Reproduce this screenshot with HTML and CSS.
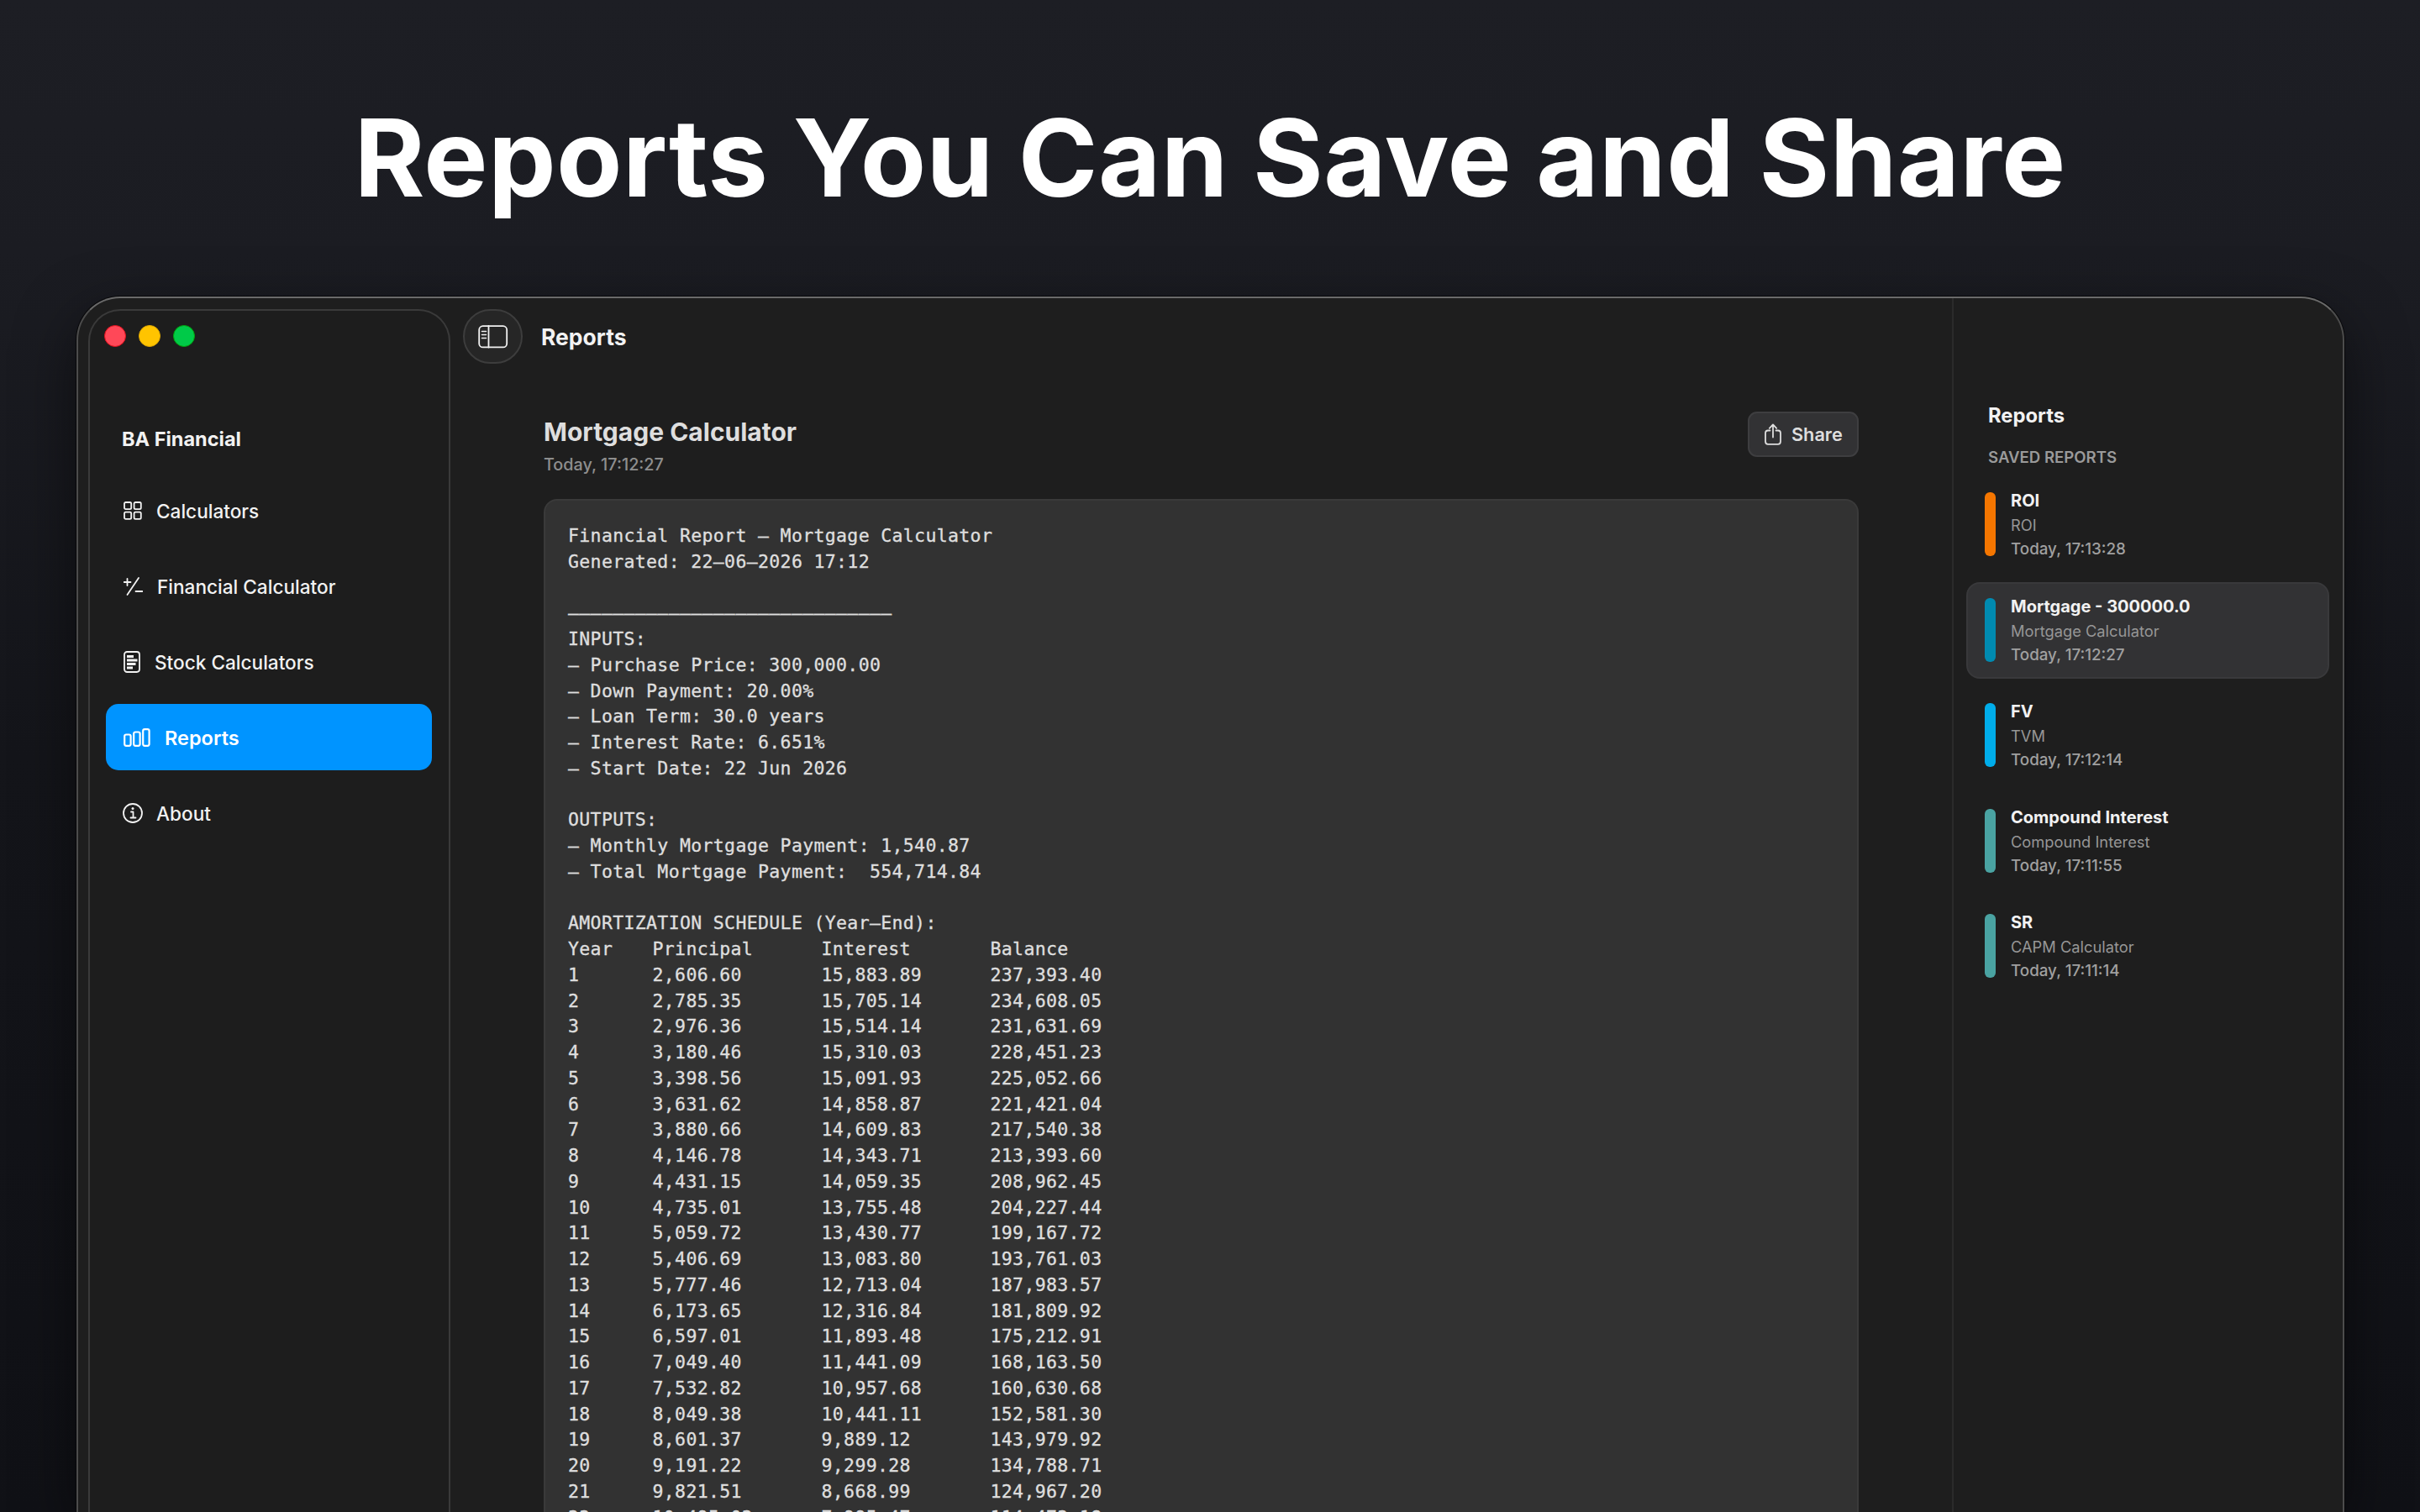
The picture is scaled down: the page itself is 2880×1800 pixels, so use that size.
FILE: index.html
```html
<!DOCTYPE html>
<html lang="en">
<head>
<meta charset="utf-8">
<title>BA Financial – Reports</title>
<link rel="stylesheet" href="styles.css">
</head>
<body>
<h1 class="headline">Reports You Can Save and Share</h1>
<div class="window">
  <aside class="sidebar">
    <div class="lights"><i class="light red"></i><i class="light yellow"></i><i class="light green"></i></div>
    <div class="brand"><span>BA Financial</span></div>
    <nav class="nav">
      <a class="nav-item"><svg width="22" height="22" viewBox="0 0 22 22"><rect x="1" y="1" width="8.2" height="8.2" rx="1.6"/><rect x="12.6" y="1" width="8.2" height="8.2" rx="1.6"/><rect x="1" y="12.6" width="8.2" height="8.2" rx="1.6"/><rect x="12.6" y="12.6" width="8.2" height="8.2" rx="1.6"/></svg><span>Calculators</span></a>
      <a class="nav-item"><svg width="23" height="22" viewBox="0 0 23 22"><path d="M18 1L4.5 21M.5 6h8M4.5 2v8M14.5 17h8"/></svg><span>Financial Calculator</span></a>
      <a class="nav-item"><svg width="20" height="26" viewBox="0 0 20 26"><rect x="1" y="1" width="18" height="24" rx="3.2"/><path class="lines" d="M4 6.5h8M4 11h12.5M4 15.5h10.5M4 20h7"/></svg><span>Stock Calculators</span></a>
      <a class="nav-item active"><svg width="32" height="22" viewBox="0 0 32 22"><rect x="1.2" y="7.5" width="7.4" height="13.3" rx="2"/><rect x="12.2" y="4.5" width="7.4" height="16.3" rx="2"/><rect x="23.2" y="1.2" width="7.4" height="19.6" rx="2"/></svg><span>Reports</span></a>
      <a class="nav-item about"><svg width="24" height="24" viewBox="0 0 24 24"><circle cx="12" cy="12" r="11"/><path d="M10 10.5h2.5v7M9.5 17.5h6"/><circle class="dot" cx="12" cy="6.5" r="1.5"/></svg><span>About</span></a>
    </nav>
  </aside>
  <main class="main">
    <header class="toolbar">
      <div class="toggle"><svg width="36" height="28" viewBox="0 0 36 28"><rect x="1.2" y="1.2" width="33" height="25.2" rx="4.5"/><path d="M12.5 1v25.5"/><path class="thin" d="M4.5 7.5h5M4.5 11.5h5M4.5 15.5h5"/></svg></div>
      <span class="toolbar-title">Reports</span>
    </header>
    <section class="report">
      <div class="report-head">
        <div><h2 class="report-title">Mortgage Calculator</h2><div class="report-date">Today, 17:12:27</div></div>
        <div class="share"><svg width="20" height="26" viewBox="0 0 20 26"><path d="M6.5 8.5H4Q1 8.5 1 11.5V21.5Q1 24.8 4 24.8H16Q19 24.8 19 21.5V11.5Q19 8.5 16 8.5H13.5M10 16.5V2M5.8 5.8L10 1.5L14.2 5.8"/></svg><span>Share</span></div>
      </div>
      <pre class="paper">Financial Report — Mortgage Calculator
Generated: 22–06–2026 17:12

–––––––––––––––––––––––––––––
INPUTS:
– Purchase Price: 300,000.00
– Down Payment: 20.00%
– Loan Term: 30.0 years
– Interest Rate: 6.651%
– Start Date: 22 Jun 2026

OUTPUTS:
– Monthly Mortgage Payment: 1,540.87
– Total Mortgage Payment:  554,714.84

AMORTIZATION SCHEDULE (Year–End):
<span class="row"><b>Year</b><b>Principal</b><b>Interest</b><b>Balance</b></span><span class="row"><b>1</b><b>2,606.60</b><b>15,883.89</b><b>237,393.40</b></span><span class="row"><b>2</b><b>2,785.35</b><b>15,705.14</b><b>234,608.05</b></span><span class="row"><b>3</b><b>2,976.36</b><b>15,514.14</b><b>231,631.69</b></span><span class="row"><b>4</b><b>3,180.46</b><b>15,310.03</b><b>228,451.23</b></span><span class="row"><b>5</b><b>3,398.56</b><b>15,091.93</b><b>225,052.66</b></span><span class="row"><b>6</b><b>3,631.62</b><b>14,858.87</b><b>221,421.04</b></span><span class="row"><b>7</b><b>3,880.66</b><b>14,609.83</b><b>217,540.38</b></span><span class="row"><b>8</b><b>4,146.78</b><b>14,343.71</b><b>213,393.60</b></span><span class="row"><b>9</b><b>4,431.15</b><b>14,059.35</b><b>208,962.45</b></span><span class="row"><b>10</b><b>4,735.01</b><b>13,755.48</b><b>204,227.44</b></span><span class="row"><b>11</b><b>5,059.72</b><b>13,430.77</b><b>199,167.72</b></span><span class="row"><b>12</b><b>5,406.69</b><b>13,083.80</b><b>193,761.03</b></span><span class="row"><b>13</b><b>5,777.46</b><b>12,713.04</b><b>187,983.57</b></span><span class="row"><b>14</b><b>6,173.65</b><b>12,316.84</b><b>181,809.92</b></span><span class="row"><b>15</b><b>6,597.01</b><b>11,893.48</b><b>175,212.91</b></span><span class="row"><b>16</b><b>7,049.40</b><b>11,441.09</b><b>168,163.50</b></span><span class="row"><b>17</b><b>7,532.82</b><b>10,957.68</b><b>160,630.68</b></span><span class="row"><b>18</b><b>8,049.38</b><b>10,441.11</b><b>152,581.30</b></span><span class="row"><b>19</b><b>8,601.37</b><b>9,889.12</b><b>143,979.92</b></span><span class="row"><b>20</b><b>9,191.22</b><b>9,299.28</b><b>134,788.71</b></span><span class="row"><b>21</b><b>9,821.51</b><b>8,668.99</b><b>124,967.20</b></span><span class="row"><b>22</b><b>10,495.02</b><b>7,995.47</b><b>114,472.18</b></span></pre>
    </section>
  </main>
  <aside class="saved">
    <div class="saved-title"><span>Reports</span></div>
    <div class="saved-sub"><span>SAVED REPORTS</span></div>
    <div class="saved-list">
      <div class="card"><i class="bar orange"></i><div><p class="name">ROI</p><p class="kind">ROI</p><p class="time">Today, 17:13:28</p></div></div>
      <div class="card selected"><i class="bar teal-blue"></i><div><p class="name">Mortgage - 300000.0</p><p class="kind">Mortgage Calculator</p><p class="time">Today, 17:12:27</p></div></div>
      <div class="card"><i class="bar sky"></i><div><p class="name">FV</p><p class="kind">TVM</p><p class="time">Today, 17:12:14</p></div></div>
      <div class="card"><i class="bar teal"></i><div><p class="name">Compound Interest</p><p class="kind">Compound Interest</p><p class="time">Today, 17:11:55</p></div></div>
      <div class="card"><i class="bar teal"></i><div><p class="name">SR</p><p class="kind">CAPM Calculator</p><p class="time">Today, 17:11:14</p></div></div>
    </div>
  </aside>
</div>
</body>
</html>
```

FILE: styles.css
```css
* { box-sizing: border-box; margin: 0; padding: 0; }
html, body { height: 1800px; overflow: hidden; }
body {
  width: 2880px;
  display: flex;
  flex-direction: column;
  background: linear-gradient(180deg, #1d1e24 0, #1b1c22 300px, #14151a 900px, #101116 1800px);
  font-family: Inter, "Liberation Sans", sans-serif;
  color: #f2f2f2;
}
svg { fill: none; stroke: currentColor; stroke-width: 1.8; stroke-linecap: round; stroke-linejoin: round; flex: none; display: block; }
.dot { fill: currentColor; stroke: none; }
.lines { stroke-width: 2.8; stroke-linecap: butt; }
.thin { stroke-width: 1.6; }
.headline {
  height: 353px;
  flex: none;
  padding-top: 110px;
  text-align: center;
  font-size: 128px;
  line-height: 156px;
  font-weight: 700;
  letter-spacing: .4px;
  word-spacing: -1.5px;
  white-space: nowrap;
  color: #fff;
}
.window {
  width: 2699px;
  height: 1447px;
  flex: none;
  margin-left: 91px;
  display: flex;
  overflow: hidden;
  background: #1e1e1e;
  border: 2px solid #4c4c4c;
  border-top-color: #6a6a6a;
  border-bottom: 0;
  border-radius: 52px 52px 0 0;
  box-shadow: 0 0 0 1px #08080a, 0 24px 70px rgba(0, 0, 0, .5);
}
.sidebar {
  width: 431px;
  margin: 13px 0 0 12px;
  border: 2px solid #3a3a3a;
  border-bottom: 0;
  border-radius: 38px 38px 0 0;
  background: #1d1d1d;
  flex: none;
}
.lights { display: flex; gap: 15px; padding: 17px 0 0 17px; height: 133px; }
.light { width: 26px; height: 26px; border-radius: 50%; border: 1px solid; }
.red { background: #ff4858; border-color: #e2101c; }
.yellow { background: #ffc400; border-color: #e0a800; }
.green { background: #00ca48; border-color: #00a40c; }
.brand { padding-left: 38px; font-size: 23.5px; line-height: 40px; font-weight: 700; height: 40px; }
.nav { display: flex; flex-direction: column; gap: 11px; padding: 25px 20px 0 19px; }
.nav-item { display: flex; align-items: center; height: 79px; padding: 1px 0 0 21px; font-size: 22.6px; font-weight: 450; border-radius: 15px; }
.nav-item span { margin-left: 17px; }
.active { background: #0094ff; color: #fff; font-weight: 600; font-size: 23.5px; }
.active svg { stroke-width: 2.2; }
.about { padding-left: 20px; }
.about span { margin-left: 16px; }
.main { width: 1787px; flex: none; display: flex; flex-direction: column; }
.toolbar { flex: none; display: flex; align-items: center; height: 91px; padding: 0 0 0 15px; }
.toggle { width: 71px; height: 65px; border: 2px solid #3d3d3d; border-radius: 33px; background: #262626; display: flex; align-items: center; justify-content: center; }
.toolbar-title { margin-left: 22px; font-size: 26.5px; font-weight: 650; }
.report { padding: 42px 111px 0 111px; }
.report-head { display: flex; justify-content: space-between; height: 106px; color: #dedede; }
.report-title { padding-top: 3px; font-size: 30px; line-height: 46px; font-weight: 700; }
.report-date { padding-top: 1px; font-size: 19.8px; line-height: 30px; color: #8e8e8e; font-weight: 450; }
.share { width: 132px; height: 54px; margin-top: 2px; border: 2px solid #3e3e40; border-radius: 11px; background: #323234; display: flex; align-items: center; padding-left: 18px; gap: 12px; font-size: 21.7px; font-weight: 600; }
.paper {
  height: 1220px;
  overflow: hidden;
  padding: 27px 28px 0 27px;
  background: #323232;
  border: 2px solid #3a3a3a;
  border-bottom: 0;
  border-radius: 16px 16px 0 0;
  font-family: "DejaVu Sans Mono", "Liberation Mono", monospace;
  font-size: 21.5px;
  line-height: 30.75px;
  letter-spacing: .35px;
  color: #dedede;
  -webkit-text-stroke: .35px #dedede;
}
.row { display: grid; grid-template-columns: 100.5px 201px 201px 1fr; height: 30.75px; }
.row b { font-weight: 400; }
.saved { flex: 1; border-left: 2px solid #2b2b2b; padding-top: 120px; }
.saved-title { padding-left: 41px; font-size: 23.8px; line-height: 40px; font-weight: 700; }
.saved-sub { padding-left: 41px; padding-top: 17px; font-size: 18.6px; line-height: 24px; font-weight: 600; color: #9a9a9a; }
.saved-list { display: flex; flex-direction: column; gap: 10.6px; padding: 11px 16px 0 15px; }
.card { height: 115px; border: 2px solid transparent; border-radius: 16px; display: flex; padding: 17px 0 0 20px; gap: 18px; }
.selected { background: #323234; border-color: #39393b; }
.bar { width: 13px; height: 76px; border-radius: 6px; }
.orange { background: #f57600; }
.teal-blue { background: #008ab0; }
.sky { background: #00adea; }
.teal { background: #4aa3a2; }
.name { font-size: 20px; line-height: 20px; font-weight: 650; }
.kind { font-size: 18.3px; line-height: 20px; margin-top: 9px; color: #969696; }
.time { font-size: 18.8px; line-height: 20px; margin-top: 9px; color: #a0a0a0; font-weight: 500; }
```
